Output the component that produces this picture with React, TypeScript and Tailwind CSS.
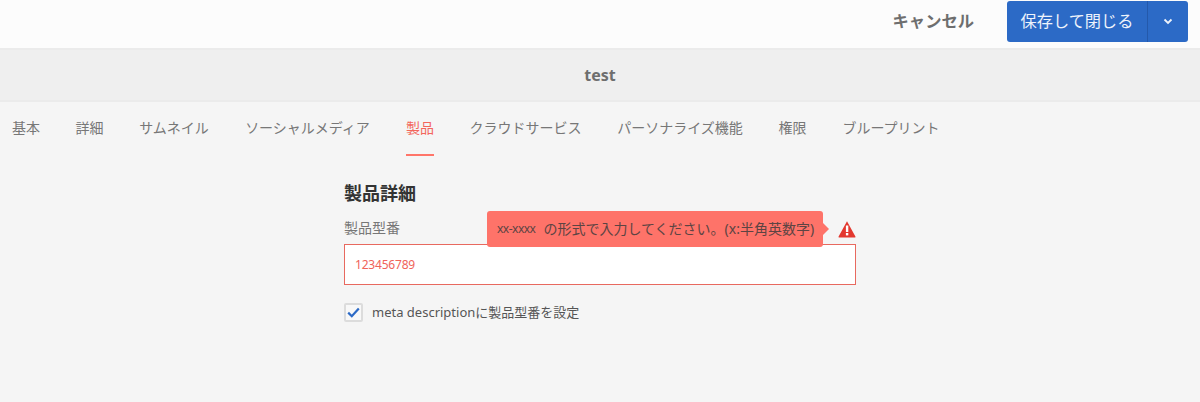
const tabs = [
  { label: '基本', width: 'w-[28px]' },
  { label: '詳細', width: 'w-[28px]' },
  { label: 'サムネイル', width: 'w-[70px]' },
  { label: 'ソーシャルメディア', width: 'w-[126px]' },
  { label: '製品', width: 'w-[28px]', active: true },
  { label: 'クラウドサービス', width: 'w-[112px]' },
  { label: 'パーソナライズ機能', width: 'w-[126px]' },
  { label: '権限', width: 'w-[28px]' },
  { label: 'ブループリント', width: 'w-[98px]' },
];

const fontStack = "font-['Noto_Sans','Noto_Sans_CJK_JP',sans-serif]";

export default function App() {
  return (
    <div className={`h-[402px] w-[1200px] overflow-hidden bg-[#f5f5f5] ${fontStack}`}>
      <header className="flex h-[50px] items-start justify-end border-b-2 border-[#ebebeb] bg-[#fcfcfc] pr-3 pt-px">
        <button className="mr-[33px] mt-[11px] text-[16.3px] leading-[18px] font-bold text-[#6e6e6e]">キャンセル</button>
        <div className="flex h-[41px] w-[181px] rounded-[3px] bg-[#2c6ac6] text-[#eef3fb]">
          <button className="w-[141px] border-r border-[#2459ab] text-[16.2px]">保存して閉じる</button>
          <button className="flex flex-1 items-center justify-center">
            <svg width="10" height="7" viewBox="0 0 10 7" fill="none">
              <path d="M1.5 1.5 5 5l3.5-3.5" stroke="#eef3fb" strokeWidth="1.8" />
            </svg>
          </button>
        </div>
      </header>

      <div className="flex h-[52px] items-center justify-center border-b-2 border-[#ebebeb] bg-[#efefef] text-base font-bold text-[#6e6e6e]">
        test
      </div>

      <nav className="flex h-[54px] gap-[35.5px] pl-3 text-sm text-[#777777]">
        {tabs.map((tab) => (
          <div
            key={tab.label}
            className={`${tab.width} flex h-full items-center justify-center whitespace-nowrap border-b-2 ${
              tab.active ? 'border-[#ff7569] text-[#f3665c]' : 'border-transparent'
            }`}
          >
            {tab.label}
          </div>
        ))}
      </nav>

      <main className="relative ml-[344px] w-[512px] pt-[25px]">
        <h2 className="text-lg leading-[24px] font-bold text-[#333333]">製品詳細</h2>
        <label className="mt-[14px] block text-sm leading-[18px] text-[#777777]">製品型番</label>
        <div className="mt-[7px] flex h-[41px] items-center border border-[#e8695f] bg-white pl-[10px] text-xs tracking-[-0.2px] text-[#f0635a]">
          123456789
        </div>

        <div className="mt-[18px] flex items-center gap-[9px]">
          <div className="flex h-[19px] w-[19px] items-center justify-center rounded-[2px] border-2 border-[#dcdcdc] bg-[#f8f8f8]">
            <svg width="13" height="11" viewBox="0 0 13 11" fill="none">
              <path d="M1.2 5.6 4.8 9.2 11.8 1.4" stroke="#2c6ac6" strokeWidth="2.2" />
            </svg>
          </div>
          <span className="text-[13px] text-[#555555]">meta descriptionに製品型番を設定</span>
        </div>

        {/* validation tooltip */}
        <div className="absolute left-[143px] top-[55px] flex h-[36px] w-[336px] items-center whitespace-nowrap rounded-[3px] bg-[#fe7369] pl-[10px] text-sm text-[#5c4443]">
          <span className="text-xs tracking-[-0.5px]">xx-xxxx</span>
          <span className="ml-[8px]">の形式で入力してください。(x:半角英数字)</span>
          <span className="absolute -right-[6px] top-[12px] h-0 w-0 border-y-[6px] border-l-[6px] border-y-transparent border-l-[#fe7369]" />
        </div>
        <svg className="absolute right-0 top-[64px]" width="18" height="18" viewBox="0 0 18 18">
          <path d="M9 1.2 17.4 16.6a.6.6 0 0 1-.5.9H1.1a.6.6 0 0 1-.5-.9Z" fill="#e3382f" />
          <rect x="7.9" y="5.5" width="2.4" height="6.5" fill="#fff" />
          <rect x="7.9" y="13" width="2.4" height="2.4" fill="#fff" />
        </svg>
      </main>
    </div>
  );
}
